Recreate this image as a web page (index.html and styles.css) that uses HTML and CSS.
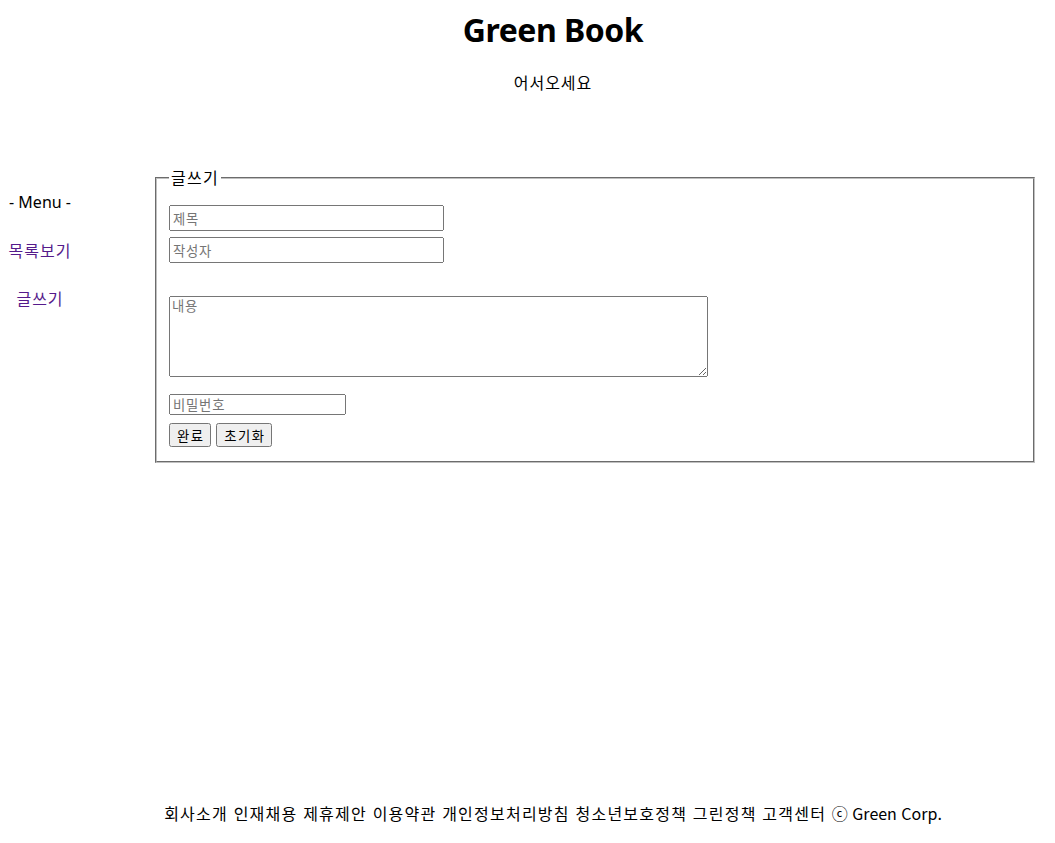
FILE: index.html
```html
<!DOCTYPE html>
<html lang="ko">
<head>
<meta charset="utf-8">
<title>Green Book</title>
<link rel="stylesheet" href="styles.css">
</head>
<body>
<header class="site-header">
  <h1 class="site-title">Green Book</h1>
  <p class="welcome">어서오세요</p>
</header>
<div class="main-row">
  <nav class="side-nav">
    <div class="menu-title">- Menu -</div>
    <a class="nav-link" href="#list">목록보기</a>
    <a class="nav-link" href="#write">글쓰기</a>
  </nav>
  <form class="write-form">
    <fieldset class="write-set">
      <legend class="write-legend">글쓰기</legend>
      <input class="field field-title" type="text" placeholder="제목">
      <input class="field field-writer" type="text" placeholder="작성자">
      <textarea class="field field-content" placeholder="내용"></textarea>
      <input class="field field-pass" type="password" placeholder="비밀번호">
      <div class="btn-row">
        <button class="btn btn-ok" type="button">완료</button>
        <button class="btn btn-reset" type="reset">초기화</button>
      </div>
    </fieldset>
  </form>
</div>
<footer class="site-footer"><span class="footer-links">회사소개 인재채용 제휴제안 이용약관 개인정보처리방침 청소년보호정책 그린정책 고객센터 </span><span class="copyright">ⓒ Green Corp.</span></footer>
</body>
</html>
```

FILE: styles.css
```css
html, body {
  height: 100%;
}
body {
  margin: 0;
  padding: 8px;
  box-sizing: border-box;
  min-height: 100vh;
  display: flex;
  flex-direction: column;
  font-family: "Noto Sans CJK KR", "Noto Sans", sans-serif;
  font-size: 16px;
  line-height: 21px;
  color: #000;
  background: #fff;
}
.site-header {
  padding-left: 51px;
  text-align: center;
}
.site-title {
  margin: 0 0 21px;
  font-size: 32px;
  line-height: 43px;
  font-weight: 700;
  letter-spacing: -0.5px;
  font-family: "Noto Sans", "Noto Sans CJK KR", sans-serif;
}
.welcome {
  margin: 0;
  letter-spacing: 1px;
}
.main-row {
  display: flex;
  align-items: flex-start;
  margin-top: 74px;
}
.side-nav {
  width: 64px;
  flex: none;
  display: flex;
  flex-direction: column;
  align-items: center;
  gap: 27px;
  padding-top: 25px;
}
.menu-title {
  white-space: nowrap;
  font-family: "Noto Sans", "Noto Sans CJK KR", sans-serif;
}
.nav-link {
  color: #551a8b;
  text-decoration: none;
  letter-spacing: 1px;
  white-space: nowrap;
}
.write-form {
  flex: 1;
  margin: 0 12px 0 83px;
}
.write-set {
  margin: 0;
  padding: 0 12px 14px;
  border: 2px groove #c0c0c0;
  display: flex;
  flex-direction: column;
  align-items: flex-start;
}
.write-legend {
  padding: 0 2px;
  line-height: 21px;
  letter-spacing: 1.3px;
}
.field {
  font-family: "Noto Sans CJK KR", sans-serif;
  font-size: 13.333px;
  letter-spacing: 0.8px;
  box-sizing: border-box;
  margin: 0;
}
.field-title {
  margin-top: 17px;
  width: 275px;
  height: 26px;
}
.field-writer {
  margin-top: 6px;
  width: 275px;
  height: 26px;
}
.field-content {
  margin-top: 33px;
  width: 539px;
  height: 81px;
  padding: 0 2px;
  line-height: 18px;
}
.field-pass {
  margin-top: 17px;
  width: 177px;
  height: 21px;
}
.btn-row {
  margin-top: 8px;
  display: flex;
  gap: 5px;
}
.btn {
  font-family: "Noto Sans CJK KR", sans-serif;
  font-size: 13.333px;
  letter-spacing: 1.4px;
  height: 24px;
  padding: 0 5px 0 6px;
  box-sizing: border-box;
  margin: 0;
}
.site-footer {
  margin-top: auto;
  margin-bottom: 11px;
  padding-left: 51px;
  text-align: center;
  white-space: nowrap;
}
.footer-links {
  letter-spacing: 1.23px;
}
.copyright {
  letter-spacing: 0;
}
```
